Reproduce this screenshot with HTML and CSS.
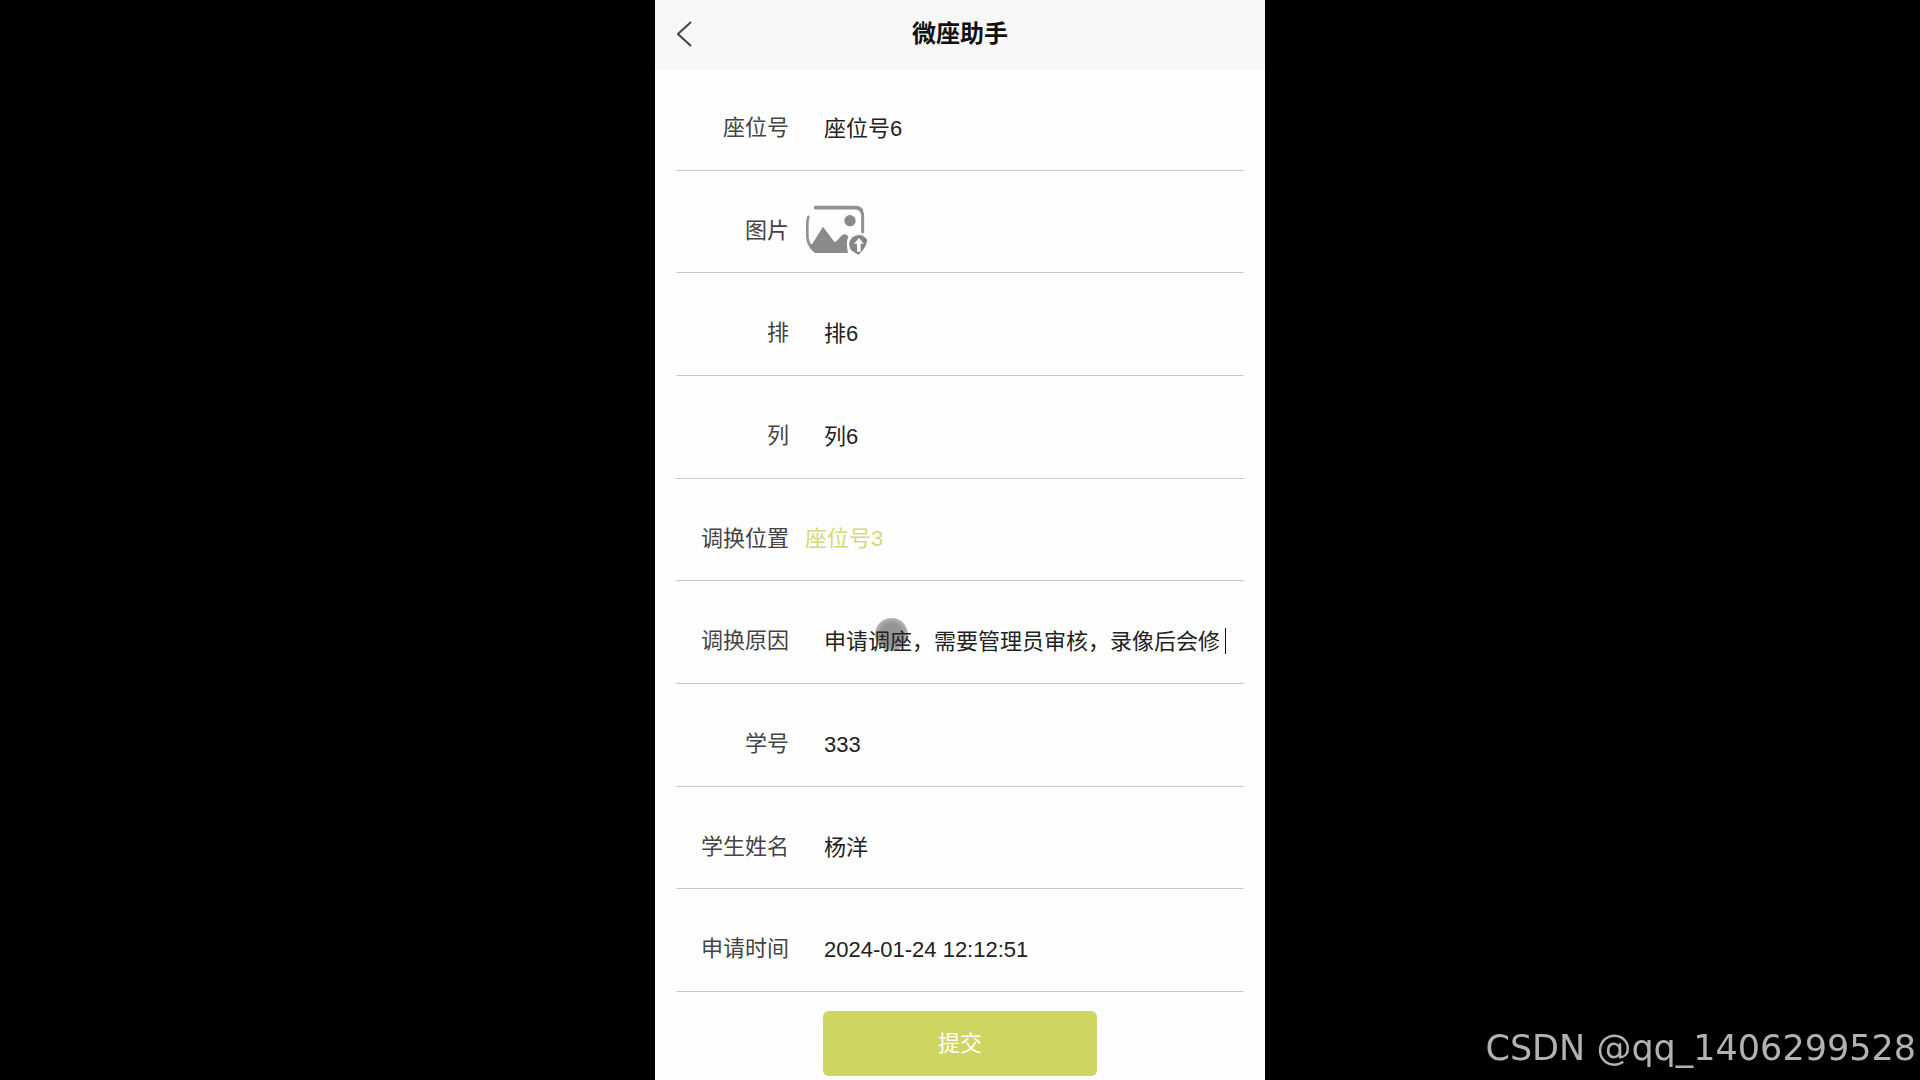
FILE: index.html
```html
<!DOCTYPE html>
<html lang="zh-CN">
<head>
<meta charset="utf-8">
<meta name="viewport" content="width=device-width, initial-scale=1">
<title>微座助手</title>
<link rel="stylesheet" href="styles.css">
</head>
<body>
<main class="panel">
  <header class="topbar">
    <button class="back" type="button" aria-label="返回">
      <svg width="16" height="26" viewBox="0 0 16 26" fill="none" stroke="#444" stroke-width="2"><path d="M14 1 1 13l13 12"/></svg>
    </button>
    <h1 class="title">微座助手</h1>
  </header>
  <form class="form">
    <div class="rows">
      <div class="row">
        <label class="label" for="seat">座位号</label>
        <input class="value" id="seat" type="text" value="座位号6">
      </div>
      <div class="row">
        <label class="label" for="picture">图片</label>
        <button class="upload" id="picture" type="button">
          <svg width="63" height="51" viewBox="46 44 189 153">
            <g fill="none" stroke="#919191" stroke-width="9" stroke-linecap="round">
              <path stroke-width="11" d="M78 52H198Q210 52 215 60"/>
              <path d="M207 55Q219 62 219 76V124"/>
              <path stroke-width="8" d="M56 80Q53 86 53 100V138Q54 162 72 180"/>
            </g>
            <path fill="#8a8a8a" d="M60 165 68 160 100 109 135 156Q142 152 150 142 163 124 176 138 168 158 175 188H76Q65 180 60 165Z"/>
            <circle cx="181" cy="91" r="17" fill="#8a8a8a"/>
            <path fill="#858585" d="M207 134Q223 134 233 149L229 164Q221 182 207 193 195 187 187 181 177 172 179 157 185 136 207 134Z"/>
            <path fill="#fff" d="M208 143 222 160H213V184H202V160H193Z"/>
          </svg>
        </button>
      </div>
      <div class="row">
        <label class="label" for="line">排</label>
        <input class="value" id="line" type="text" value="排6">
      </div>
      <div class="row">
        <label class="label" for="column">列</label>
        <input class="value" id="column" type="text" value="列6">
      </div>
      <div class="row">
        <label class="label" for="target">调换位置</label>
        <select class="choice" id="target"><option>座位号3</option></select>
      </div>
      <div class="row">
        <label class="label" for="reason">调换原因</label>
        <div class="editing">
          <span class="touch"></span>
          <input class="value value-active" id="reason" type="text" value="申请调座，需要管理员审核，录像后会修">
          <span class="caret"></span>
        </div>
      </div>
      <div class="row">
        <label class="label" for="number">学号</label>
        <input class="value" id="number" type="text" value="333">
      </div>
      <div class="row">
        <label class="label" for="name">学生姓名</label>
        <input class="value" id="name" type="text" value="杨洋">
      </div>
      <div class="row">
        <label class="label" for="time">申请时间</label>
        <input class="value" id="time" type="text" value="2024-01-24 12:12:51">
      </div>
    </div>
    <div class="actions">
      <button class="submit" type="submit">提交</button>
    </div>
  </form>
</main>
<div class="watermark">CSDN @qq_1406299528</div>
</body>
</html>
```
FILE: styles.css
```css
* {
  box-sizing: border-box;
}

body {
  margin: 0;
  background: #000;
  color: #222;
  font: 22px/32px "Liberation Sans", "Noto Sans CJK SC", sans-serif;
}

button,
input,
select {
  margin: 0;
  padding: 0;
  border: 0;
  background: none;
  color: inherit;
  font: inherit;
}

.panel {
  display: flex;
  flex-direction: column;
  max-width: 610px;
  min-height: 100vh;
  margin: 0 auto;
  background: #fefefe;
}

.topbar {
  display: grid;
  grid-template-columns: 40px 1fr 40px;
  align-items: center;
  height: 68px;
  padding: 0 22px;
  background: #f8f8f8;
  box-shadow: 0 2px #f8f8f8;
}

.back {
  display: flex;
}

.title {
  margin: 0;
  color: #111;
  font-size: 24px;
  line-height: 32px;
  font-weight: 700;
  text-align: center;
}

.form,
.rows {
  display: flex;
  flex: 1;
  flex-direction: column;
}

.rows {
  padding: 0 21px;
}

.row {
  display: grid;
  flex: 1;
  grid-template-columns: 113px 1fr;
  column-gap: 16px;
  align-items: center;
  min-height: 84px;
  padding-top: 18px;
  border-bottom: 1px solid #c8c8c8;
}

.label {
  color: #444;
  text-align: right;
}

.value {
  width: 100%;
  height: 32px;
  margin-top: 2px;
  padding-left: 19px;
  outline: 0;
}

.choice {
  appearance: none;
  width: 100%;
  height: 32px;
  color: #d3da78;
}

.upload {
  display: flex;
  justify-self: start;
}

.editing {
  display: flex;
  align-items: center;
  position: relative;
}

.value-active {
  position: relative;
  flex: 0 1 420px;
}

.caret {
  width: 1px;
  height: 26px;
  background: #111;
}

/* Touch indicator under the text being edited */
.touch {
  position: absolute;
  left: 70px;
  bottom: 7px;
  width: 33px;
  height: 33px;
  border-radius: 50%;
  background: radial-gradient(circle, #949494 45%, #b4b4b4 70%);
}

.actions {
  display: flex;
  justify-content: center;
  padding: 19px 0 4px;
}

.submit {
  width: 45%;
  height: 65px;
  border-radius: 6px;
  background: #ced560;
  color: #fff;
}

.watermark {
  position: fixed;
  right: 4px;
  bottom: 12px;
  color: #b2b2b2;
  font: 35px/40px "DejaVu Sans", sans-serif;
}
```
